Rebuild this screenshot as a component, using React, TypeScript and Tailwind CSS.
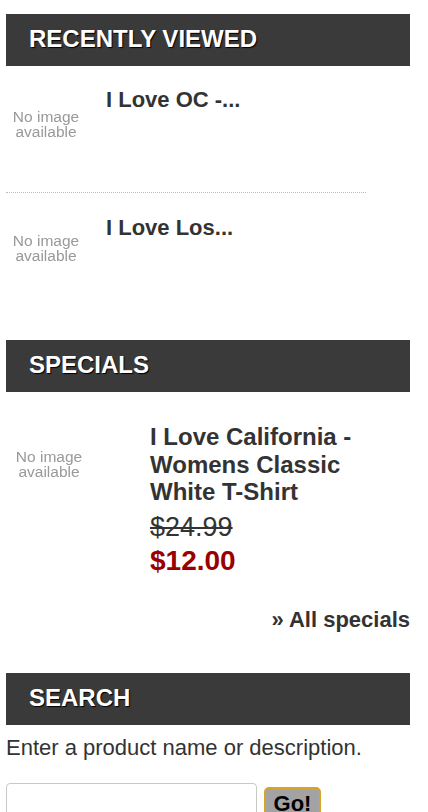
export default function App() {
  const recent = [
    { id: 1, title: "I Love OC -...", imgTop: "mt-[10px]" },
    { id: 2, title: "I Love Los...", imgTop: "mt-[6px]" },
  ];

  return (
    <div className="w-[404px] ml-[6px] pt-[14px] bg-white text-[#333] font-['Liberation_Sans',Arial,sans-serif]">
      <SideHeader title="RECENTLY VIEWED" />

      <div>
        {recent.map((item, i) => (
          <div key={item.id}>
            <div className={`flex ${i === 0 ? "mt-[20px]" : "mt-[21px]"}`}>
              <div className={`w-[100px] shrink-0 ${item.imgTop}`}>
                <NoImage width="w-[80px]" />
              </div>
              <p className="text-[22px] leading-[27.5px] font-bold">{item.title}</p>
            </div>
            {i === 0 && (
              <hr className="mt-[40px] w-[360px] border-0 border-t border-dotted border-[#bbb]" />
            )}
          </div>
        ))}
      </div>

      <div className="mt-[64px]">
        <SideHeader title="SPECIALS" />
      </div>

      <div className="flex mt-[31px]">
        <div className="w-[144px] shrink-0 mt-[13px]">
          <NoImage width="w-[86px]" />
        </div>
        <div>
          <p className="text-[24px] leading-[27.5px] font-bold">
            I Love California -<br />
            Womens Classic<br />
            White T-Shirt
          </p>
          <p className="text-[27px] leading-[34px] line-through mt-[4px]">$24.99</p>
          <p className="text-[28px] leading-[34px] font-bold text-[#990000]">$12.00</p>
        </div>
      </div>

      <p className="mt-[28px] text-right text-[22px] leading-[27.5px] font-bold">» All specials</p>

      <div className="mt-[40px]">
        <SideHeader title="SEARCH" />
      </div>

      <p className="mt-[9px] text-[22px] leading-[27.5px]">Enter a product name or description.</p>

      <div className="flex items-start gap-[7px] mt-[21px]">
        <input className="w-[251px] h-[36px] border border-[#c8c8c8] rounded-[4px] bg-white outline-none px-2" />
        <button className="mt-[4px] w-[57px] h-[34px] bg-[#a3a3a3] border-2 border-[#d8a328] rounded-[5px] text-[22px] font-bold text-black leading-none">
          Go!
        </button>
      </div>
    </div>
  );
}

function SideHeader({ title }: { title: string }) {
  return (
    <div className="h-[52px] bg-[#3a3a3a] flex items-center pl-[23px]">
      <h3 className="text-[24px] font-bold text-white [text-shadow:1px_1px_1px_#000] -mt-[2px]">
        {title}
      </h3>
    </div>
  );
}

function NoImage({ width }: { width: string }) {
  return (
    <div className={`${width} h-[56px] flex flex-col items-center justify-center text-[15.5px] leading-[15.5px] text-[#999] blur-[0.6px]`}>
      <span>No image</span>
      <span>available</span>
    </div>
  );
}
